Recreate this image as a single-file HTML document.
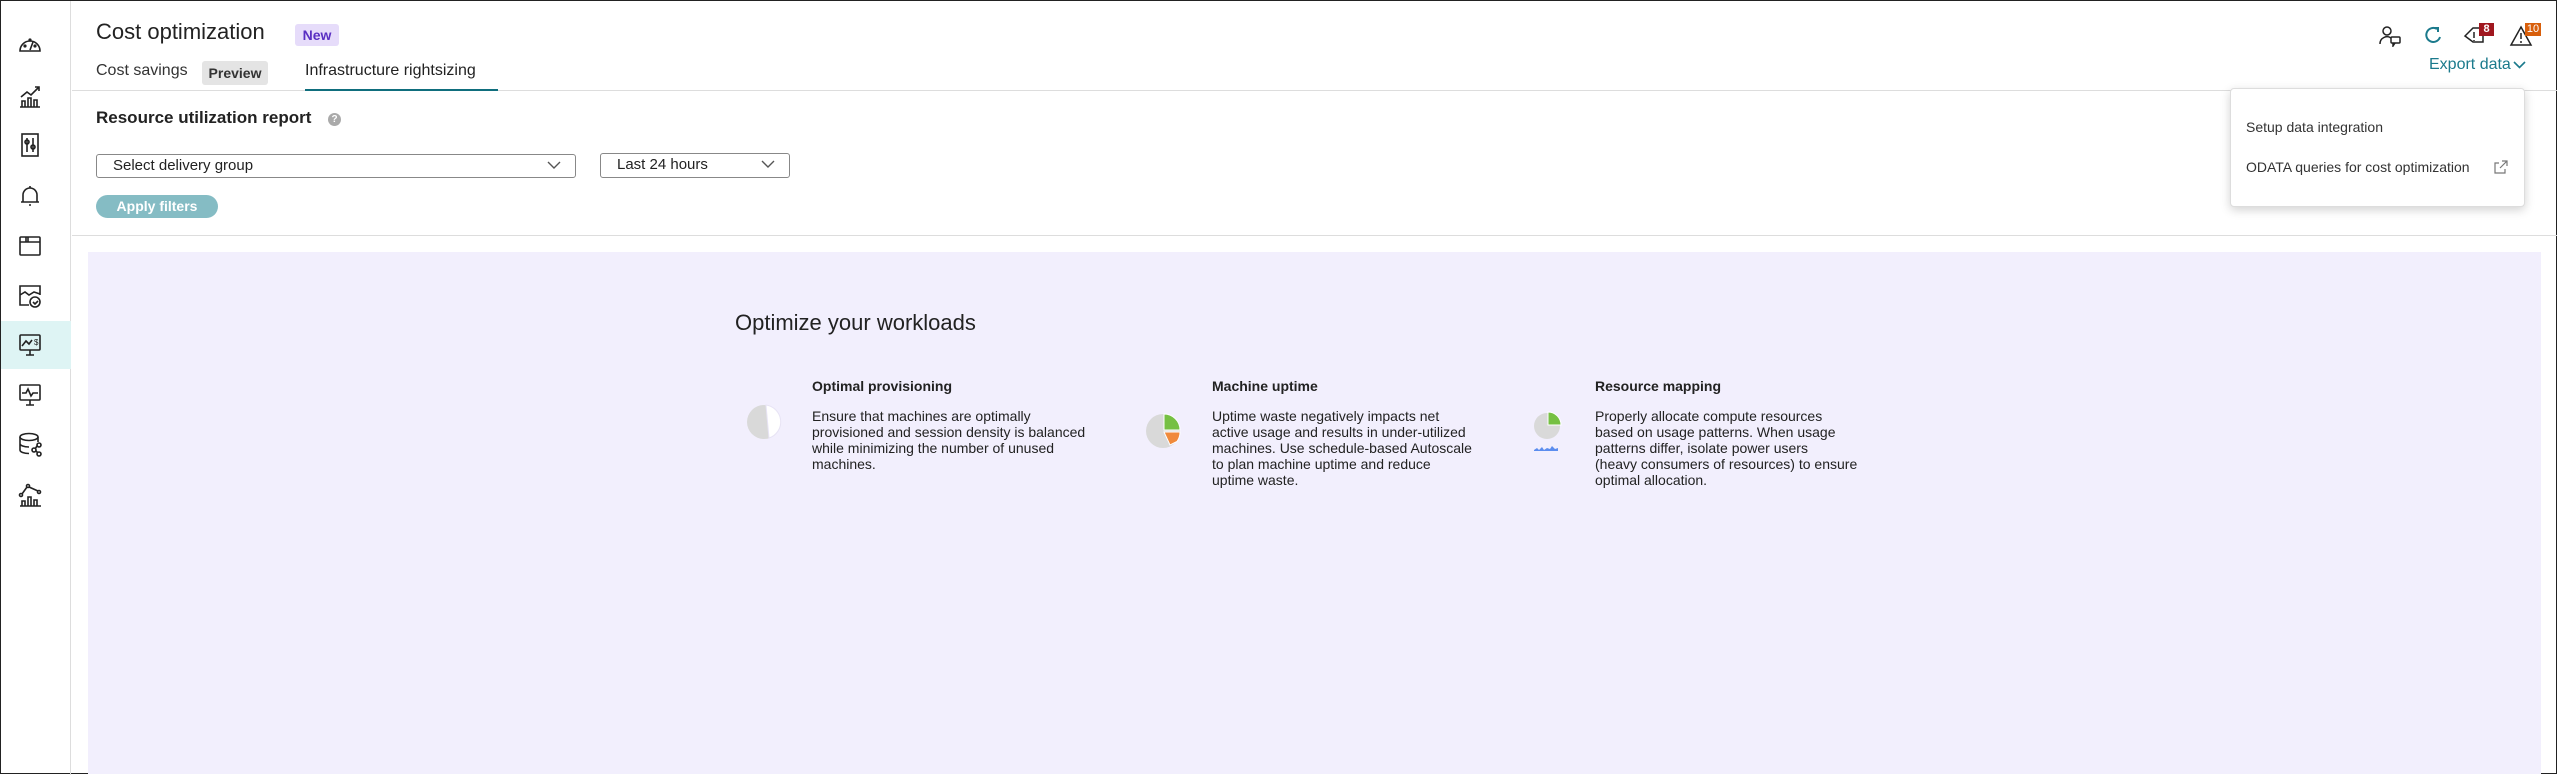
<!DOCTYPE html>
<html><head><meta charset="utf-8">
<style>
*{margin:0;padding:0;box-sizing:border-box}
body{width:2557px;height:774px;overflow:hidden;background:#fff;font-family:"Liberation Sans",sans-serif;color:#222;position:relative;border:1px solid #222}
.a{position:absolute}
.side{left:0;top:0;width:70px;height:774px;border-right:1px solid #ddd}
.ico{position:absolute;left:16px;width:26px;height:26px}
.ico svg{width:26px;height:26px;fill:none;stroke:#222;stroke-width:1.6}
.t{white-space:nowrap}
.sel{border:1px solid #888;border-radius:3px;height:24px;font-size:15px;line-height:22px;padding-left:16px;color:#222}
.chev{position:absolute;right:14px;top:5px;width:14px;height:10px}
.col{font-size:14px;line-height:16px;color:#222}
.col b{display:block;font-size:14px;margin-bottom:14px}
</style></head><body>
<div class="a side"></div>
<div class="a" style="left:0;top:320px;width:70px;height:48px;background:#def4f4"></div>
<!-- sidebar icons -->
<div class="ico" style="top:30px"><svg viewBox="0 0 26 26"><path d="M3 20a10 10 0 1 1 20 0z"/><path d="M13 19l3-8"/><circle cx="8" cy="15" r=".8"/><circle cx="18" cy="15" r=".8"/><circle cx="13" cy="9" r=".8"/></svg></div>
<div class="ico" style="top:82px"><svg viewBox="0 0 26 26"><path d="M3 24h20M5 24v-6h3v6M11 24v-9h3v9M17 24v-7h3v7M4 14l6-5 4 3 8-8M18 4h4v4"/></svg></div>
<div class="ico" style="top:131px"><svg viewBox="0 0 26 26"><rect x="5" y="2" width="16" height="22"/><path d="M10 6v14M16 6v14"/><circle cx="10" cy="10" r="2"/><circle cx="16" cy="15" r="2"/></svg></div>
<div class="ico" style="top:182px"><svg viewBox="0 0 26 26"><path d="M13 3v2M6 19v-7a7 7 0 0 1 14 0v7h2H4h2M12 22h2"/></svg></div>
<div class="ico" style="top:232px"><svg viewBox="0 0 26 26"><rect x="3" y="4" width="20" height="18" rx="1"/><path d="M3 9h20M9 4v5M11 4v5"/></svg></div>
<div class="ico" style="top:282px"><svg viewBox="0 0 26 26"><path d="M12 22H3V3h20v9M3 12l5-3 4 3 5-3 6 2"/><circle cx="18" cy="19" r="5"/><path d="M16 19l2 2 3-3"/></svg></div>
<div class="ico" style="top:331px"><svg viewBox="0 0 26 26"><rect x="3" y="3" width="20" height="15" rx="1"/><path d="M5 14l4-5 3 3 3-4M13 23h0M9 23h8M13 18v5"/><text x="17" y="13" font-size="8" fill="#222" stroke="none" font-family="Liberation Sans">$</text></svg></div>
<div class="ico" style="top:381px"><svg viewBox="0 0 26 26"><rect x="3" y="3" width="20" height="15" rx="1"/><path d="M5 11h4l2-4 3 7 2-3h5M9 23h8M13 18v5"/></svg></div>
<div class="ico" style="top:430px"><svg viewBox="0 0 26 26"><ellipse cx="12" cy="6" rx="9" ry="3.5"/><path d="M3 6v13c0 2 4 3.5 9 3.5M21 6v5M3 12.5c0 2 4 3.5 9 3.5"/><circle cx="22" cy="14" r="2"/><circle cx="17" cy="19" r="2"/><circle cx="22" cy="23" r="2"/><path d="M20 15l-2 3M19 20l2 2"/></svg></div>
<div class="ico" style="top:481px"><svg viewBox="0 0 26 26"><path d="M3 24h21M5 24v-5h3v5M11 24v-9h3v9M17 24v-6h3v6"/><circle cx="4" cy="13" r="1.5"/><circle cx="11" cy="4" r="1.5"/><circle cx="22" cy="10" r="1.5"/><path d="M5 12l5-7M12 5l9 4"/></svg></div>

<!-- header -->
<div class="a t" style="left:95px;top:18px;font-size:22px;color:#222">Cost optimization</div>
<div class="a t" style="left:294px;top:23px;width:44px;height:22px;background:#e6dcfa;border-radius:3px;color:#5a2fc2;font-size:14px;line-height:22px;text-align:center;font-weight:bold">New</div>
<div class="a t" style="left:95px;top:61px;font-size:16px;color:#333">Cost savings</div>
<div class="a t" style="left:201px;top:60px;width:66px;height:24px;background:#e4e4e4;border-radius:3px;font-size:14px;line-height:24px;text-align:center;font-weight:bold;color:#333">Preview</div>
<div class="a t" style="left:304px;top:61px;font-size:16px;color:#222">Infrastructure rightsizing</div>
<div class="a" style="left:71px;top:89px;width:2486px;height:1px;background:#ddd"></div>
<div class="a" style="left:304px;top:88px;width:193px;height:2px;background:#0f6e7d"></div>

<!-- right icons -->
<svg class="a" style="left:2378px;top:24px" width="24" height="22" viewBox="0 0 24 22" fill="none" stroke="#222" stroke-width="1.5"><circle cx="8" cy="6" r="4"/><path d="M1 19a7 7 0 0 1 11-6"/><rect x="12" y="12" width="9" height="6" rx="1"/><path d="M14 18v3l2-3"/></svg>
<svg class="a" style="left:2421px;top:24px" width="22" height="22" viewBox="0 0 22 22" fill="none" stroke="#1b7a8c" stroke-width="2"><path d="M18 12a7 7 0 1 1-3-8"/><path d="M12 3h4v4" /></svg>
<svg class="a" style="left:2462px;top:25px" width="24" height="20" viewBox="0 0 24 20" fill="none" stroke="#222" stroke-width="1.5"><path d="M2 10l8-8h10v14H10z"/><path d="M11 6v6M11 14v1"/></svg>
<div class="a" style="left:2478px;top:22px;width:15px;height:13px;background:#a0171f;color:#fff;font-size:11px;font-weight:bold;line-height:13px;text-align:center">8</div>
<svg class="a" style="left:2508px;top:24px" width="24" height="22" viewBox="0 0 24 22" fill="none" stroke="#222" stroke-width="1.5"><path d="M12 2L22 20H2z"/><path d="M12 8v6M12 16v2"/></svg>
<div class="a" style="left:2524px;top:22px;width:16px;height:13px;background:#d85f0b;color:#fff;font-size:11px;line-height:13px;text-align:center">10</div>
<div class="a t" style="left:2428px;top:55px;font-size:16px;color:#1b7a8c">Export data</div>
<svg class="a" style="left:2512px;top:60px" width="13" height="8" viewBox="0 0 13 8" fill="none" stroke="#1b7a8c" stroke-width="1.6"><path d="M1 1l5.5 5.5L12 1"/></svg>

<!-- filters -->
<div class="a t" style="left:95px;top:107px;font-size:17px;font-weight:bold;color:#222">Resource utilization report</div>
<div class="a" style="left:327px;top:112px;width:13px;height:13px;border-radius:50%;background:#aaa;color:#fff;font-size:10px;line-height:13px;text-align:center;font-weight:bold">?</div>
<div class="a sel t" style="left:95px;top:153px;width:480px">Select delivery group<svg class="chev" viewBox="0 0 14 10" fill="none" stroke="#555" stroke-width="1.4"><path d="M1 2l6 6 6-6"/></svg></div>
<div class="a sel t" style="left:599px;top:152px;width:190px;height:25px">Last 24 hours<svg class="chev" viewBox="0 0 14 10" fill="none" stroke="#555" stroke-width="1.4"><path d="M1 2l6 6 6-6"/></svg></div>
<div class="a t" style="left:95px;top:194px;width:122px;height:23px;background:#85bcc4;border-radius:12px;color:#fff;font-size:14px;font-weight:bold;line-height:23px;text-align:center">Apply filters</div>
<div class="a" style="left:71px;top:234px;width:2486px;height:1px;background:#ddd"></div>

<!-- panel -->
<div class="a" style="left:87px;top:251px;width:2453px;height:522px;background:#f2effd"></div>
<div class="a t" style="left:734px;top:309px;font-size:22px;color:#222">Optimize your workloads</div>

<svg class="a" style="left:744px;top:402px" width="40" height="40" viewBox="0 0 40 40"><circle cx="19" cy="19" r="17" fill="#d9d9d9"/><path d="M21 2a17 17 0 0 1 3 33z" fill="#fff" stroke="#e8e4f5" stroke-width="1"/></svg>
<svg class="a" style="left:1143px;top:411px" width="40" height="40" viewBox="0 0 40 40"><circle cx="19" cy="19" r="17" fill="#d9d9d9"/><path d="M20 18V2a16 16 0 0 1 16 16z" fill="#76c043" stroke="#fff" stroke-width="1"/><path d="M20 20h16a16 16 0 0 1-3 9.5L26 33z" fill="#f08a3c" stroke="#fff" stroke-width="1"/></svg>
<svg class="a" style="left:1530px;top:408px" width="34" height="48" viewBox="0 0 34 48"><circle cx="16" cy="17" r="13" fill="#d9d9d9"/><path d="M17 16V3a13 13 0 0 1 13 13z" fill="#76c043" stroke="#fff" stroke-width="1"/><path d="M3 41l3-2 2 2 3-3 2 3 3-2 3 1 2-3 3 3 3-1v3H3z" fill="#5b8def"/></svg>

<div class="a col" style="left:811px;top:377px;width:300px"><b>Optimal provisioning</b>Ensure that machines are optimally<br>provisioned and session density is balanced<br>while minimizing the number of unused<br>machines.</div>
<div class="a col" style="left:1211px;top:377px;width:300px"><b>Machine uptime</b>Uptime waste negatively impacts net<br>active usage and results in under-utilized<br>machines. Use schedule-based Autoscale<br>to plan machine uptime and reduce<br>uptime waste.</div>
<div class="a col" style="left:1594px;top:377px;width:300px"><b>Resource mapping</b>Properly allocate compute resources<br>based on usage patterns. When usage<br>patterns differ, isolate power users<br>(heavy consumers of resources) to ensure<br>optimal allocation.</div>

<!-- dropdown -->
<div class="a" style="left:2229px;top:87px;width:295px;height:119px;background:#fff;border:1px solid #ddd;border-radius:4px;box-shadow:0 3px 10px rgba(0,0,0,.18)"></div>
<div class="a t" style="left:2245px;top:118px;font-size:14px;color:#333">Setup data integration</div>
<div class="a t" style="left:2245px;top:158px;font-size:14px;color:#333">ODATA queries for cost optimization</div>
<svg class="a" style="left:2492px;top:158px" width="16" height="16" viewBox="0 0 16 16" fill="none" stroke="#777" stroke-width="1.2"><path d="M9 2h5v5M14 2L7 9M12 10v4H2V4h4"/></svg>
</body></html>
